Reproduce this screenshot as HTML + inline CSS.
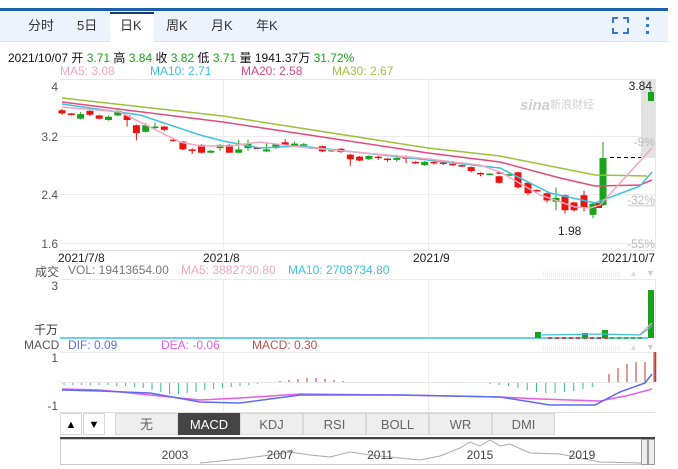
<!DOCTYPE html>
<html><head><meta charset="utf-8"><style>
*{margin:0;padding:0;box-sizing:border-box}
body{width:678px;height:469px;background:#fff;position:relative;overflow:hidden;font-family:"Liberation Sans","Noto Sans CJK SC",sans-serif;font-size:12px;color:#333}
.a{position:absolute;white-space:nowrap}
.tab{position:absolute;top:10px;height:31px;line-height:32px;font-size:13px;color:#333}
.g{color:#1aa21a}
.btn{position:absolute;top:413px;height:22px;line-height:22px;text-align:center;background:#eee;border:1px solid #d8d8d8;color:#666;font-size:13px}
</style></head><body>
<div class="a" style="left:0;top:8px;width:668px;height:3px;background:#1c5fae"></div>
<div class="a" style="left:0;top:11px;width:668px;height:31px;background:#edf3fc;border-bottom:1px solid #d9e1ec"></div>
<div class="a" style="left:110px;top:12px;width:44px;height:30px;background:#fff;border-top:2px solid #1c3a78"></div>
<div class="tab" style="left:28px">分时</div>
<div class="tab" style="left:77px">5日</div>
<div class="tab" style="left:120px">日K</div>
<div class="tab" style="left:166px">周K</div>
<div class="tab" style="left:211px">月K</div>
<div class="tab" style="left:256px">年K</div>
<svg class="a" style="left:610px;top:15px" width="50" height="20"><g fill="none" stroke="#3b78cf" stroke-width="2"><path d="M3 8V3h5M13 3h5v5M18 13v5h-5M8 18H3v-5"/></g><g fill="#3b78cf"><rect x="36" y="2" width="3" height="3"/><rect x="36" y="9" width="3" height="3"/><rect x="36" y="16" width="3" height="3"/></g></svg>
<div class="a" style="left:8px;top:49px;color:#111">2021/10/07 开 <span class="g">3.71</span> 高 <span class="g">3.84</span> 收 <span class="g">3.82</span> 低 <span class="g">3.71</span> 量 1941.37万 <span class="g">31.72%</span></div>
<div class="a" style="left:60px;top:64px;color:#f4a6c0">MA5: 3.08</div>
<div class="a" style="left:150px;top:64px;color:#3cc1de">MA10: 2.71</div>
<div class="a" style="left:241px;top:64px;color:#e0457d">MA20: 2.58</div>
<div class="a" style="left:332px;top:64px;color:#9fc23f">MA30: 2.67</div>
<svg class="a" id="s" style="left:0;top:0" width="678" height="469"></svg>
<div class="a" style="left:35px;top:263px;color:#555">成交</div>
<div class="a" style="left:68px;top:263px;color:#777">VOL: 19413654.00</div>
<div class="a" style="left:181px;top:263px;color:#f4a6c0">MA5: 3882730.80</div>
<div class="a" style="left:288px;top:263px;color:#3cc1de">MA10: 2708734.80</div>
<div class="a" style="left:24px;top:338px;color:#555">MACD</div>
<div class="a" style="left:68px;top:338px;color:#5b6cf0">DIF: 0.09</div>
<div class="a" style="left:161px;top:338px;color:#e85ce8">DEA: -0.06</div>
<div class="a" style="left:252px;top:338px;color:#c0504d">MACD: 0.30</div>
<div class="btn" style="left:60px;width:22px;background:#fff;color:#000;font-size:11px">▲</div>
<div class="btn" style="left:83px;width:22px;background:#fff;color:#000;font-size:11px">▼</div>
<div class="btn" style="left:115px;width:63px">无</div>
<div class="btn" style="left:178px;width:62px;background:#444;color:#fff;border-color:#444">MACD</div>
<div class="btn" style="left:240px;width:63px">KDJ</div>
<div class="btn" style="left:303px;width:63px">RSI</div>
<div class="btn" style="left:366px;width:63px">BOLL</div>
<div class="btn" style="left:429px;width:63px">WR</div>
<div class="btn" style="left:492px;width:63px">DMI</div>
<script>
var s='';
function L(x1,y1,x2,y2,c,w,d){s+='<line x1="'+x1+'" y1="'+y1+'" x2="'+x2+'" y2="'+y2+'" stroke="'+c+'" stroke-width="'+(w||1)+'"'+(d?' stroke-dasharray="'+d+'"':'')+'/>';}
function R(x,y,w,h,c){s+='<rect x="'+x+'" y="'+y+'" width="'+w+'" height="'+h+'" fill="'+c+'"/>';}
function T(x,y,t,c,a,fs,st){s+='<text x="'+x+'" y="'+y+'" fill="'+(c||'#444')+'" font-size="'+(fs||12)+'" text-anchor="'+(a||'start')+'" font-family="Liberation Sans,Noto Sans CJK SC,sans-serif"'+(st||'')+'>'+t+'</text>';}
function P(pts,c,w){s+='<polyline fill="none" stroke="'+c+'" stroke-width="'+(w||1.5)+'" points="'+pts+'"/>';}
L(60,79.5,655,79.5,'#e6e6e6');
[136,194,243].forEach(function(y){L(60,y+.5,655,y+.5,'#ececec')});
L(60,250.5,655,250.5,'#e0e0e0');
[223,428].forEach(function(x){L(x+.5,79,x+.5,250,'#ececec');L(x+.5,279,x+.5,338,'#ececec');L(x+.5,353,x+.5,412,'#ececec')});
L(655.5,79,655.5,250,'#e6e6e6');
T(58,91,'4','#555','end');T(58,141,'3.2','#555','end');T(58,199,'2.4','#555','end');T(58,248,'1.6','#555','end');
T(520,110,'sina','#d0d0d0','start',15,' font-style="italic" font-weight="bold"');T(550,108,'新浪财经','#d0d0d0','start',11);
R(641,80,14,78,'#e2e2e2');
L(610,157.5,641,157.5,'#000',1,'4,3');
L(628,205.5,655,205.5,'#ddd',2);
T(652,90,'3.84','#222','end');T(655,146,'-9%','#bbb','end');T(655,204,'-32%','#bbb','end');T(655,248,'-55%','#bbb','end');
T(558,235,'1.98','#222','start');
function py(p){return 86+(4-p)*65.4}
var d=[[3.63,3.58,3.65,3.56],[3.58,3.56,3.59,3.55],[3.50,3.57,3.60,3.49],[3.62,3.56,3.63,3.54],[3.55,3.50,3.56,3.49],[3.48,3.53,3.55,3.47],[3.55,3.62,3.63,3.54],[3.55,3.48,3.56,3.38],[3.40,3.28,3.41,3.17],[3.30,3.40,3.43,3.29],[3.37,3.38,3.44,3.33],[3.38,3.33,3.39,3.31],[3.18,3.16,3.20,3.15],[3.15,3.03,3.16,3.02],[3.03,3.01,3.05,2.96],[3.10,2.98,3.11,2.97],[2.98,3.01,3.02,2.97],[3.05,3.10,3.11,3.01],[3.10,2.98,3.11,2.98],[2.98,3.03,3.18,2.97],[3.05,3.12,3.18,3.01],[3.06,3.05,3.06,3.04],[3.00,3.03,3.12,2.99],[3.05,3.11,3.12,3.04],[3.14,3.10,3.19,3.09],[3.08,3.12,3.15,3.07],[3.10,3.11,3.13,3.06],[3.06,3.06,3.07,3.04],[3.08,3.00,3.09,2.99],[3.00,3.03,3.04,2.99],[3.04,2.99,3.05,2.98],[2.95,2.88,2.96,2.78],[2.92,2.86,2.93,2.85],[2.88,2.93,2.94,2.87],[2.92,2.90,2.93,2.87],[2.89,2.88,2.90,2.84],[2.87,2.90,2.95,2.84],[2.91,2.89,2.94,2.82],[2.84,2.82,2.85,2.81],[2.79,2.84,2.85,2.78],[2.84,2.83,2.86,2.80],[2.83,2.81,2.86,2.79],[2.81,2.79,2.82,2.78],[2.79,2.77,2.80,2.76],[2.76,2.70,2.77,2.68],[2.67,2.65,2.68,2.62],[2.66,2.66,2.67,2.65],[2.62,2.52,2.63,2.51]];
var xs=[];for(var i=0;i<48;i++)xs.push(62+i*9.3);
[500,509,518,528,537,547,556,565,574,584,593].forEach(function(x){xs.push(x)});
var tail=[[2.68,2.67,2.69,2.66],[2.65,2.65,2.66,2.64],[2.68,2.45,2.69,2.43],[2.52,2.36,2.53,2.33],[2.41,2.40,2.42,2.39],[2.36,2.25,2.37,2.22],[2.23,2.29,2.45,2.10],[2.33,2.10,2.34,2.05],[2.22,2.10,2.23,2.08],[2.33,2.15,2.40,2.08],[2.03,2.20,2.22,1.98]];
d=d.concat(tail);
for(i=0;i<d.length;i++){var c=d[i],x=xs[i],up=c[1]>=c[0],col=up?'#1aa21a':'#e8140f';var t=py(Math.max(c[0],c[1])),b=py(Math.min(c[0],c[1]));L(x,py(c[2]),x,py(c[3]),col);R(x-3.5,t,7,Math.max(1.5,b-t),col);}
L(603,142,603,206,'#1aa21a');R(599.5,158,7,47,'#1aa21a');
R(596,203,6,5,'#e8140f');
L(651,90,651,101,'#1aa21a');R(648,92,6,9,'#1aa21a');
P('62,98 223,116 428,148 500,156 560,168 595,175 647,176','#99c23a');
P('62,102 223,122 428,153 500,162 560,178 595,186 640,185 652,180','#e24a7c');
P('62,104 140,115 200,135 223,141 260,148 300,146 428,160 500,168 550,193 595,203 640,186 652,172','#3cc1de');
P('62,107 120,112 180,142 200,146 230,146 260,142 300,147 420,158 480,165 500,172 540,195 575,207 590,208 600,205 652,148','#f4a6c0');
T(58,262,'2021/7/8','#222');T(203,262,'2021/8','#222');T(413,262,'2021/9','#222');T(655,262,'2021/10/7','#222','end');
L(60,279.5,655,279.5,'#eaeaea');L(655.5,279,655.5,338,'#e6e6e6');
T(58,290,'3','#555','end');T(58,334,'千万','#333','end');
L(60,338,648,338,'#3cc1de',1.5);
L(548,338,610,338,'#e8140f',1.5,'4,3');L(610,338,645,338,'#1aa21a',1.5,'4,3');
R(535,332,6,6,'#1aa21a');R(582,333,6,5,'#1aa21a');R(602,330,6,8,'#1aa21a');R(648,290,6,48,'#1aa21a');
P('540,335 600,334 640,335 652,326','#3cc1de',1.2);P('640,334 652,323','#f4a6c0',1.2);
for(var k=0;k<5;k++){L(543,272+k*1.2,620,272+k*1.2,'#ddd',0.5,'1,1');L(543,346+k*1.2,620,346+k*1.2,'#ddd',0.5,'1,1');}
T(629,276,'▲','#ddd','start',9);T(646,276,'▼','#ccc','start',9);T(629,350,'▲','#ddd','start',9);T(646,350,'▼','#ccc','start',9);
L(60,352.5,655,352.5,'#eaeaea');L(60,382.5,655,382.5,'#e8e8e8');L(60,412.5,655,412.5,'#e0e0e0');
T(58,362,'1','#555','end');T(58,410,'-1','#555','end');
var neg=[2,2,2,2,2,2,3,3,4,5,7,9,11,11,10,9,7,6,5,4,3,2,1];
for(i=0;i<neg.length;i++){L(64+i*8.8,383,64+i*8.8,383+neg[i],'#2ec08a');}
[1,2,3,4,4,3,2,1].forEach(function(h,j){L(280+j*9,382,280+j*9,382-h,'#c0392b')});
[1,2,3,5,7,9,10,10,9,8,6,4].forEach(function(h,j){L(490+j*9.3,383,490+j*9.3,383+h,'#2ec08a')});
[8,14,18,20,20,30].forEach(function(h,j){L(609+j*9,382,609+j*9,382-h,'#c0392b')});
P('62,389 100,390 150,395 200,400 240,398 300,394 400,395 500,397 540,399 600,401 630,395 652,389','#e85ce8',1.5);
P('62,390 100,391 150,393 200,402 240,403 300,395 400,395 500,397 550,405 595,405 620,392 645,383 652,374','#5b6cf0',1.5);
L(655.5,352,655.5,382,'#c0392b',1.5);
R(60,437,595,2,'#444');
s+='<rect x="60.5" y="439.5" width="594" height="25" fill="none" stroke="#ccc"/>';
P('200,463 240,459 270,455 290,452 310,455 330,457 350,452 370,455 400,458 420,460 440,456 460,448 470,442 480,446 490,440 500,446 510,444 530,453 560,454 580,458 600,462 641,463','#aaa',1);
T(175,459,'2003','#444','middle');T(280,459,'2007','#444','middle');T(380,459,'2011','#444','middle');T(480,459,'2015','#444','middle');T(582,459,'2019','#444','middle');
s+='<rect x="641.5" y="439.5" width="6" height="25" fill="#eee" stroke="#999"/><rect x="648.5" y="439.5" width="6" height="25" fill="#eee" stroke="#999"/>';
document.getElementById('s').innerHTML=s;
</script>
</body></html>
